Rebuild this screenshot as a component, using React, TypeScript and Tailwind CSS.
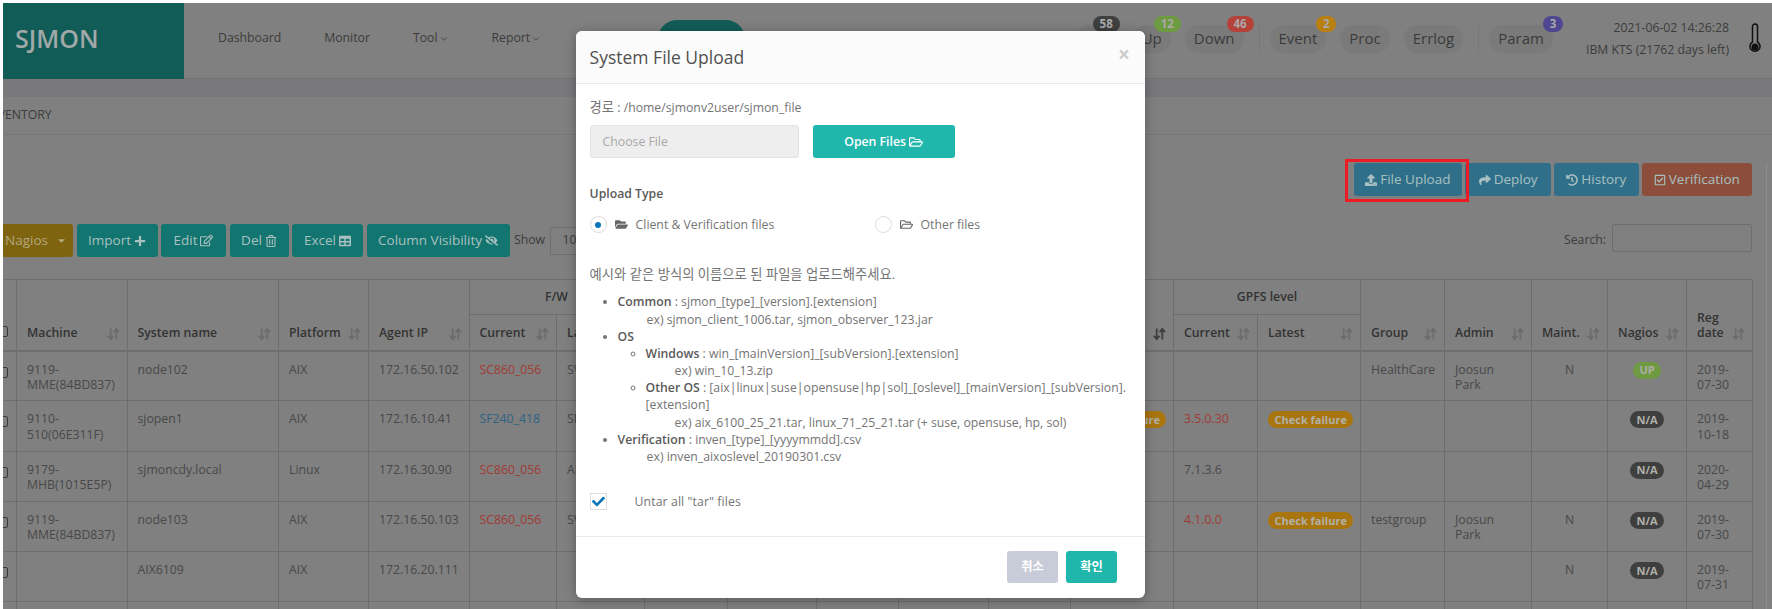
import { ChevronDown } from "lucide-react";
import {
  FaCaretDown,
  FaCheck,
  FaEyeSlash,
  FaFolderOpen,
  FaHistory,
  FaPlus,
  FaRegCheckSquare,
  FaRegEdit,
  FaRegFolderOpen,
  FaRegTrashAlt,
  FaShare,
  FaTable,
  FaUpload,
} from "react-icons/fa";

const SortIcon = ({ active = false }: { active?: boolean }) => (
  <svg
    viewBox="0 0 14 14"
    className={`w-[13px] h-[14px] shrink-0 ${active ? "text-[#3f3f3f]" : "text-[#6c6c6c]"}`}
    fill="none"
    stroke="currentColor"
    strokeWidth="2"
  >
    <path d="M4 1v11M1 9l3 3.5L7 9" />
    <path d="M10 13V2M7 5l3-3.5L13 5" />
  </svg>
);

const Thermometer = () => (
  <svg viewBox="0 0 12 32" className="w-[12px] h-[32px] text-[#111]">
    <path
      d="M3.5 19V3.5a2.5 2.5 0 0 1 5 0V19a5 5 0 1 1-5 0z"
      fill="none"
      stroke="currentColor"
      strokeWidth="1.5"
    />
    <circle cx="6" cy="24" r="3.5" fill="currentColor" />
  </svg>
);

const Pill = ({
  label,
  count,
  color,
  wide = true,
}: {
  label: string;
  count?: string;
  color?: string;
  wide?: boolean;
}) => (
  <div className="relative h-[28px] px-[9px] rounded-[14px] bg-[#7a7a7a] flex items-center text-[15px] text-[#3a3a3a]">
    {label}
    {count && (
      <span
        className={`absolute -top-[9px] -right-[10px] h-[16px] rounded-full ${color} ${
          wide ? "w-[27px]" : "w-[20px]"
        } flex items-center justify-center text-[11.5px] font-bold text-[#a9a9a9]`}
      >
        {count}
      </span>
    )}
  </div>
);

const Sep = () => <div className="w-px h-[28px] bg-[#777777]" />;

const Header = () => (
  <div className="h-[76px] bg-[#808080] border-b border-[#747474] flex items-center pb-[4px] pr-[11px]">
    <div className="w-[181px] h-[76px] -mb-[4px] bg-[#125c57] flex items-center pl-[12px] pb-[4px] text-[25px] font-semibold text-[#a1a9a8] shrink-0">
      SJMON
    </div>
    <div className="flex items-center gap-[43px] ml-[34px] text-[12.25px] text-[#3c3c3c]">
      <span>Dashboard</span>
      <span>Monitor</span>
      <span className="flex items-center gap-[1px]">
        Tool <ChevronDown size={10} />
      </span>
      <span className="flex items-center gap-[1px]">
        Report <ChevronDown size={10} />
      </span>
    </div>
    <div className="ml-[117px] w-[87px] h-[38px] rounded-full bg-[#125c57]" />
    <div className="ml-auto flex items-center">
      <div className="flex items-center gap-[14px]">
        <Pill label="All" count="58" color="bg-[#3f3f3f]" />
        <div className="ml-[-5px] mr-[-1px]">
          <Sep />
        </div>
        <Pill label="Up" count="12" color="bg-[#6e9a42]" />
        <Pill label="Down" count="46" color="bg-[#b5423a]" />
      </div>
      <div className="mx-[10px] ml-[15px]">
        <Sep />
      </div>
      <div className="flex items-center gap-[14px]">
        <Pill label="Event" count="2" color="bg-[#b87f11]" wide={false} />
        <Pill label="Proc" />
        <Pill label="Errlog" />
      </div>
      <div className="mx-[10px] ml-[15px]">
        <Sep />
      </div>
      <Pill label="Param" count="3" color="bg-[#4e4690]" wide={false} />
      <div className="ml-[33px] flex flex-col items-end gap-[7px] text-[12.25px] leading-[15px] text-[#3c3c3c]">
        <span>2021-06-02 14:26:28</span>
        <span>IBM KTS (21762 days left)</span>
      </div>
      <div className="ml-[20px]">
        <Thermometer />
      </div>
    </div>
  </div>
);

const btn =
  "h-[33px] rounded-[3px] flex items-center justify-center gap-[3px] text-[13.5px] text-[#a9c0c0] shrink-0";

const tableWidths = [
  20, 110.5, 151.5, 90, 100.5, 87.5, 87.5, 83.5, 88.5, 82.5, 89.5, 82.5, 103, 84, 103, 84, 87, 76,
  79, 66,
];

const rows = [
  {
    machine: "9119-\nMME(84BD837)",
    name: "node102",
    platform: "AIX",
    ip: "172.16.50.102",
    fw: "SC860_056",
    fwColor: "text-[#a23a34]",
    latest: "SV860_226",
    hiddenBadge: "bg-[#b5423a]",
    gpfs: "",
    gpfsColor: "",
    check: false,
    group: "HealthCare",
    admin: "Joosun\nPark",
    maint: "N",
    nagios: "UP",
    date: "2019-\n07-30",
  },
  {
    machine: "9110-\n510(06E311F)",
    name: "sjopen1",
    platform: "AIX",
    ip: "172.16.10.41",
    fw: "SF240_418",
    fwColor: "text-[#2f6384]",
    latest: "SF240_569",
    hiddenBadge: "bg-[#a9750f]",
    gpfs: "3.5.0.30",
    gpfsColor: "text-[#a23a34]",
    check: true,
    group: "",
    admin: "",
    maint: "",
    nagios: "N/A",
    date: "2019-\n10-18",
  },
  {
    machine: "9179-\nMHB(1015E5P)",
    name: "sjmoncdy.local",
    platform: "Linux",
    ip: "172.16.30.90",
    fw: "SC860_056",
    fwColor: "text-[#a23a34]",
    latest: "AL770_127",
    hiddenBadge: "",
    gpfs: "7.1.3.6",
    gpfsColor: "",
    check: false,
    group: "",
    admin: "",
    maint: "",
    nagios: "N/A",
    date: "2020-\n04-29",
  },
  {
    machine: "9119-\nMME(84BD837)",
    name: "node103",
    platform: "AIX",
    ip: "172.16.50.103",
    fw: "SC860_056",
    fwColor: "text-[#a23a34]",
    latest: "SV860_226",
    hiddenBadge: "",
    gpfs: "4.1.0.0",
    gpfsColor: "text-[#a23a34]",
    check: true,
    group: "testgroup",
    admin: "Joosun\nPark",
    maint: "N",
    nagios: "N/A",
    date: "2019-\n07-30",
  },
  {
    machine: "",
    name: "AIX6109",
    platform: "AIX",
    ip: "172.16.20.111",
    fw: "",
    fwColor: "",
    latest: "",
    hiddenBadge: "",
    gpfs: "",
    gpfsColor: "",
    check: false,
    group: "",
    admin: "",
    maint: "N",
    nagios: "N/A",
    date: "2019-\n07-31",
  },
];

const Th = ({
  label,
  rowSpan,
  active,
}: {
  label?: string;
  rowSpan?: number;
  active?: boolean;
}) => (
  <th
    rowSpan={rowSpan}
    className="border border-[#6e6e6e] border-b-2 align-bottom pl-[10px] pr-[7px] pb-[9px] font-semibold text-left"
  >
    <div className="flex items-end justify-between whitespace-pre-line">
      <span>{label}</span>
      <SortIcon active={active} />
    </div>
  </th>
);

const Td = ({ children, className = "" }: { children?: React.ReactNode; className?: string }) => (
  <td
    className={`border border-[#6e6e6e] align-top px-[10px] pt-[10px] h-[50.3px] whitespace-pre-line ${className}`}
  >
    {children}
  </td>
);

const Badge = ({ color, children }: { color: string; children?: React.ReactNode }) => (
  <span
    className={`inline-flex align-top h-[17px] min-w-[28px] items-center justify-center rounded-full px-[6.5px] text-[11px] font-bold whitespace-nowrap text-[#b0b0a8] ${color}`}
  >
    {children}
  </span>
);

const Box = () => <div className="w-[10px] h-[11px] ml-auto border border-[#3a3a3a] rounded-[2px]" />;

const InventoryTable = () => (
  <table className="table-fixed border-collapse w-[1756px] -ml-[7px] text-[12.25px] leading-[15.3px] text-[#484848]">
    <colgroup>
      {tableWidths.map((w, i) => (
        <col key={i} style={{ width: w }} />
      ))}
    </colgroup>
    <thead className="text-[#333333]">
      <tr className="h-[35px]">
        <th rowSpan={2} className="border border-[#6e6e6e] border-b-2 align-bottom pb-[13px] pr-[8px]">
          <Box />
        </th>
        <Th label="Machine" rowSpan={2} />
        <Th label="System name" rowSpan={2} />
        <Th label="Platform" rowSpan={2} />
        <Th label="Agent IP" rowSpan={2} />
        <th colSpan={2} className="border border-[#6e6e6e] font-semibold text-center">
          F/W
        </th>
        <Th rowSpan={2} />
        <Th rowSpan={2} />
        <Th rowSpan={2} />
        <Th rowSpan={2} />
        <Th rowSpan={2} />
        <Th rowSpan={2} active />
        <th colSpan={2} className="border border-[#6e6e6e] font-semibold text-center">
          GPFS level
        </th>
        <Th label="Group" rowSpan={2} />
        <Th label="Admin" rowSpan={2} />
        <Th label="Maint." rowSpan={2} />
        <Th label="Nagios" rowSpan={2} />
        <Th label={"Reg\ndate"} rowSpan={2} />
      </tr>
      <tr className="h-[36px]">
        <Th label="Current" />
        <Th label="Latest" />
        <Th label="Current" />
        <Th label="Latest" />
      </tr>
    </thead>
    <tbody>
      {rows.map((r) => (
        <tr key={r.ip}>
          <td className="border border-[#6e6e6e] align-top pt-[15px] pr-[8px] h-[50.3px]">
            <Box />
          </td>
          <Td>{r.machine}</Td>
          <Td>{r.name}</Td>
          <Td>{r.platform}</Td>
          <Td>{r.ip}</Td>
          <Td className={r.fwColor}>{r.fw}</Td>
          <Td>{r.latest}</Td>
          <Td />
          <Td />
          <Td />
          <Td />
          <Td />
          <Td>
            {r.hiddenBadge && <Badge color={r.hiddenBadge}>{r.check ? "Check failure" : "Down"}</Badge>}
          </Td>
          <Td className={r.gpfsColor}>{r.gpfs}</Td>
          <Td>{r.check && <Badge color="bg-[#a9750f]">Check failure</Badge>}</Td>
          <Td>{r.group}</Td>
          <Td>{r.admin}</Td>
          <Td className="text-center">{r.maint}</Td>
          <Td className="text-center">
            <Badge color={r.nagios === "UP" ? "bg-[#6e9a42]" : "bg-[#3f3f3f] min-w-[34px]"}>{r.nagios}</Badge>
          </Td>
          <Td>{r.date}</Td>
        </tr>
      ))}
      <tr>
        {tableWidths.map((_, i) => (
          <Td key={i} />
        ))}
      </tr>
    </tbody>
  </table>
);

const Modal = () => (
  <div className="absolute left-[572.6px] top-[28px] w-[569.5px] h-[567px] bg-white rounded-[6px] shadow-[0_2px_12px_rgba(0,0,0,0.3)] flex flex-col text-[12.25px] leading-[17.15px] text-[#747474]">
    <div className="h-[53px] shrink-0 px-[14px] pt-[2px] flex items-center justify-between bg-[#fbfbfb] border-b border-[#e9e9e9] rounded-t-[6px]">
      <span className="text-[17.5px] text-[#505050]">System File Upload</span>
      <span className="text-[21px] font-bold text-[#cccccc] -mt-[6px] mr-[1px]">×</span>
    </div>
    <div className="flex-1 px-[14px] pt-[15px]">
      <p>
        <span className="text-[13.3px]">경로</span> : /home/sjmonv2user/sjmon_file
      </p>
      <div className="flex gap-[14px] mt-[9px]">
        <div className="w-[209px] h-[33px] bg-[#eeeeee] border border-[#e4e4e4] rounded-[3px] flex items-center pl-[12px] text-[#a8a8a8]">
          Choose File
        </div>
        <div className="w-[142px] h-[33px] bg-[#20b6ab] rounded-[3px] flex items-center justify-center gap-[3px] font-semibold text-white">
          Open Files <FaRegFolderOpen size={14} />
        </div>
      </div>
      <p className="mt-[27px] font-semibold text-[#5a5a5a]">Upload Type</p>
      <div className="flex items-center mt-[14px] h-[17px]">
        <div className="w-[285px] flex items-center">
          <span className="w-[17px] h-[17px] rounded-full border border-[#dddddd] flex items-center justify-center">
            <span className="w-[6px] h-[6px] rounded-full bg-[#0b76b8]" />
          </span>
          <FaFolderOpen size={13} className="ml-[8px] text-[#666666]" />
          <span className="ml-[8px]">Client &amp; Verification files</span>
        </div>
        <div className="flex items-center">
          <span className="w-[17px] h-[17px] rounded-full border border-[#dddddd]" />
          <FaRegFolderOpen size={13} className="ml-[8px] text-[#666666]" />
          <span className="ml-[8px]">Other files</span>
        </div>
      </div>
      <p className="mt-[33px] text-[13.3px]">예시와 같은 방식의 이름으로 된 파일을 업로드해주세요.</p>
      <ul className="list-disc pl-[28px] mt-[10px]">
        <li>
          <b className="font-semibold text-[#5a5a5a]">Common</b> : sjmon_[type]_[version].[extension]
          <div className="pl-[29px]">ex) sjmon_client_1006.tar, sjmon_observer_123.jar</div>
        </li>
        <li>
          <b className="font-semibold text-[#5a5a5a]">OS</b>
          <ul className="list-[circle] pl-[28px]">
            <li>
              <b className="font-semibold text-[#5a5a5a]">Windows</b> : win_[mainVersion]_[subVersion].[extension]
              <div className="pl-[29px]">ex) win_10_13.zip</div>
            </li>
            <li>
              <b className="font-semibold text-[#5a5a5a]">Other OS</b> : [aix|linux|suse|opensuse|hp|sol]_[oslevel]_[mainVersion]_[subVersion].[extension]
              <div className="pl-[29px]">ex) aix_6100_25_21.tar, linux_71_25_21.tar (+ suse, opensuse, hp, sol)</div>
            </li>
          </ul>
        </li>
        <li>
          <b className="font-semibold text-[#5a5a5a]">Verification</b> : inven_[type]_[yyyymmdd].csv
          <div className="pl-[29px]">ex) inven_aixoslevel_20190301.csv</div>
        </li>
      </ul>
      <div className="flex items-center mt-[28px]">
        <span className="w-[17px] h-[17px] border border-[#dddddd] flex items-center justify-center text-[#0b76b8]">
          <FaCheck size={13} />
        </span>
        <span className="ml-[28px] tracking-[0.1px]">Untar all "tar" files</span>
      </div>
    </div>
    <div className="h-[62px] shrink-0 border-t border-[#e9e9e9] pt-[14px] pr-[28px] flex justify-end gap-[8px]">
      <div className="w-[51px] h-[32px] rounded-[3px] bg-[#c8ccd8] flex items-center justify-center font-semibold text-white">
        취소
      </div>
      <div className="w-[51px] h-[32px] rounded-[3px] bg-[#20b6ab] flex items-center justify-center font-semibold text-white">
        확인
      </div>
    </div>
  </div>
);

export default function App() {
  return (
    <div className="w-[1772px] h-[609px] overflow-hidden bg-white pl-[3px] pt-[3px] font-['Open_Sans','Noto_Sans_CJK_KR',sans-serif]">
      <div className="relative h-[606px] overflow-hidden bg-[#808080]">
        <Header />
        <div className="h-[18px] bg-[#79797c]" />
        <div className="h-[38px] border-b border-[#777777] flex items-center -ml-[18px] text-[12.25px] text-[#3c3c3c]">
          INVENTORY
        </div>
        <div className="border-r border-[#8c8c8c] mr-[5px] pr-[14px]">
          <div className="flex justify-end gap-[3px] mt-[28px]">
            <div className="relative">
              <div className={`${btn} w-[108.5px] bg-[#2f6f8a]`}>
                <FaUpload size={12} /> File Upload
              </div>
              <div className="absolute -left-[8.5px] -right-[6.5px] -top-[4px] -bottom-[6px] border-[3px] border-[#ed1c24]" />
            </div>
            <div className={`${btn} w-[86px] bg-[#2f6f8a]`}>
              <FaShare size={12} /> Deploy
            </div>
            <div className={`${btn} w-[84.5px] bg-[#2f6f8a]`}>
              <FaHistory size={12} /> History
            </div>
            <div className={`${btn} w-[110.4px] bg-[#8c4e3b]`}>
              <FaRegCheckSquare size={12} /> Verification
            </div>
          </div>
          <div className="flex items-center justify-between mt-[28px] h-[33px]">
            <div className="flex items-center gap-[3.5px] -ml-[20px]">
              <div className={`${btn} w-[90px] !justify-start pl-[22px] bg-[#7f6410] text-[#b3a77d] gap-[8px]`}>
                Nagios <FaCaretDown size={11} />
              </div>
              <div className={`${btn} w-[81px] bg-[#13756f]`}>
                Import <FaPlus size={12} />
              </div>
              <div className={`${btn} w-[65px] bg-[#13756f]`}>
                Edit <FaRegEdit size={13} />
              </div>
              <div className={`${btn} w-[59px] bg-[#13756f]`}>
                Del <FaRegTrashAlt size={12} />
              </div>
              <div className={`${btn} w-[71px] bg-[#13756f]`}>
                Excel <FaTable size={12} />
              </div>
              <div className={`${btn} w-[143px] bg-[#13756f]`}>
                Column Visibility <FaEyeSlash size={13} />
              </div>
              <span className="ml-[1px] -mt-[1px] text-[12.25px] text-[#3c3c3c]">Show</span>
              <div className="ml-[1px] w-[60px] h-[28px] border border-[#6e6e6e] rounded-[2px] flex items-center pl-[12px] text-[12.25px] text-[#3c3c3c]">
                10
              </div>
            </div>
            <div className="flex items-start gap-[6px] self-start text-[12.25px] text-[#3c3c3c]">
              <span className="mt-[7px]">Search:</span>
              <div className="w-[140px] h-[28px] border border-[#6e6e6e] rounded-[2px]" />
            </div>
          </div>
          <div className="mt-[22px]">
            <InventoryTable />
          </div>
        </div>
        <Modal />
      </div>
    </div>
  );
}
